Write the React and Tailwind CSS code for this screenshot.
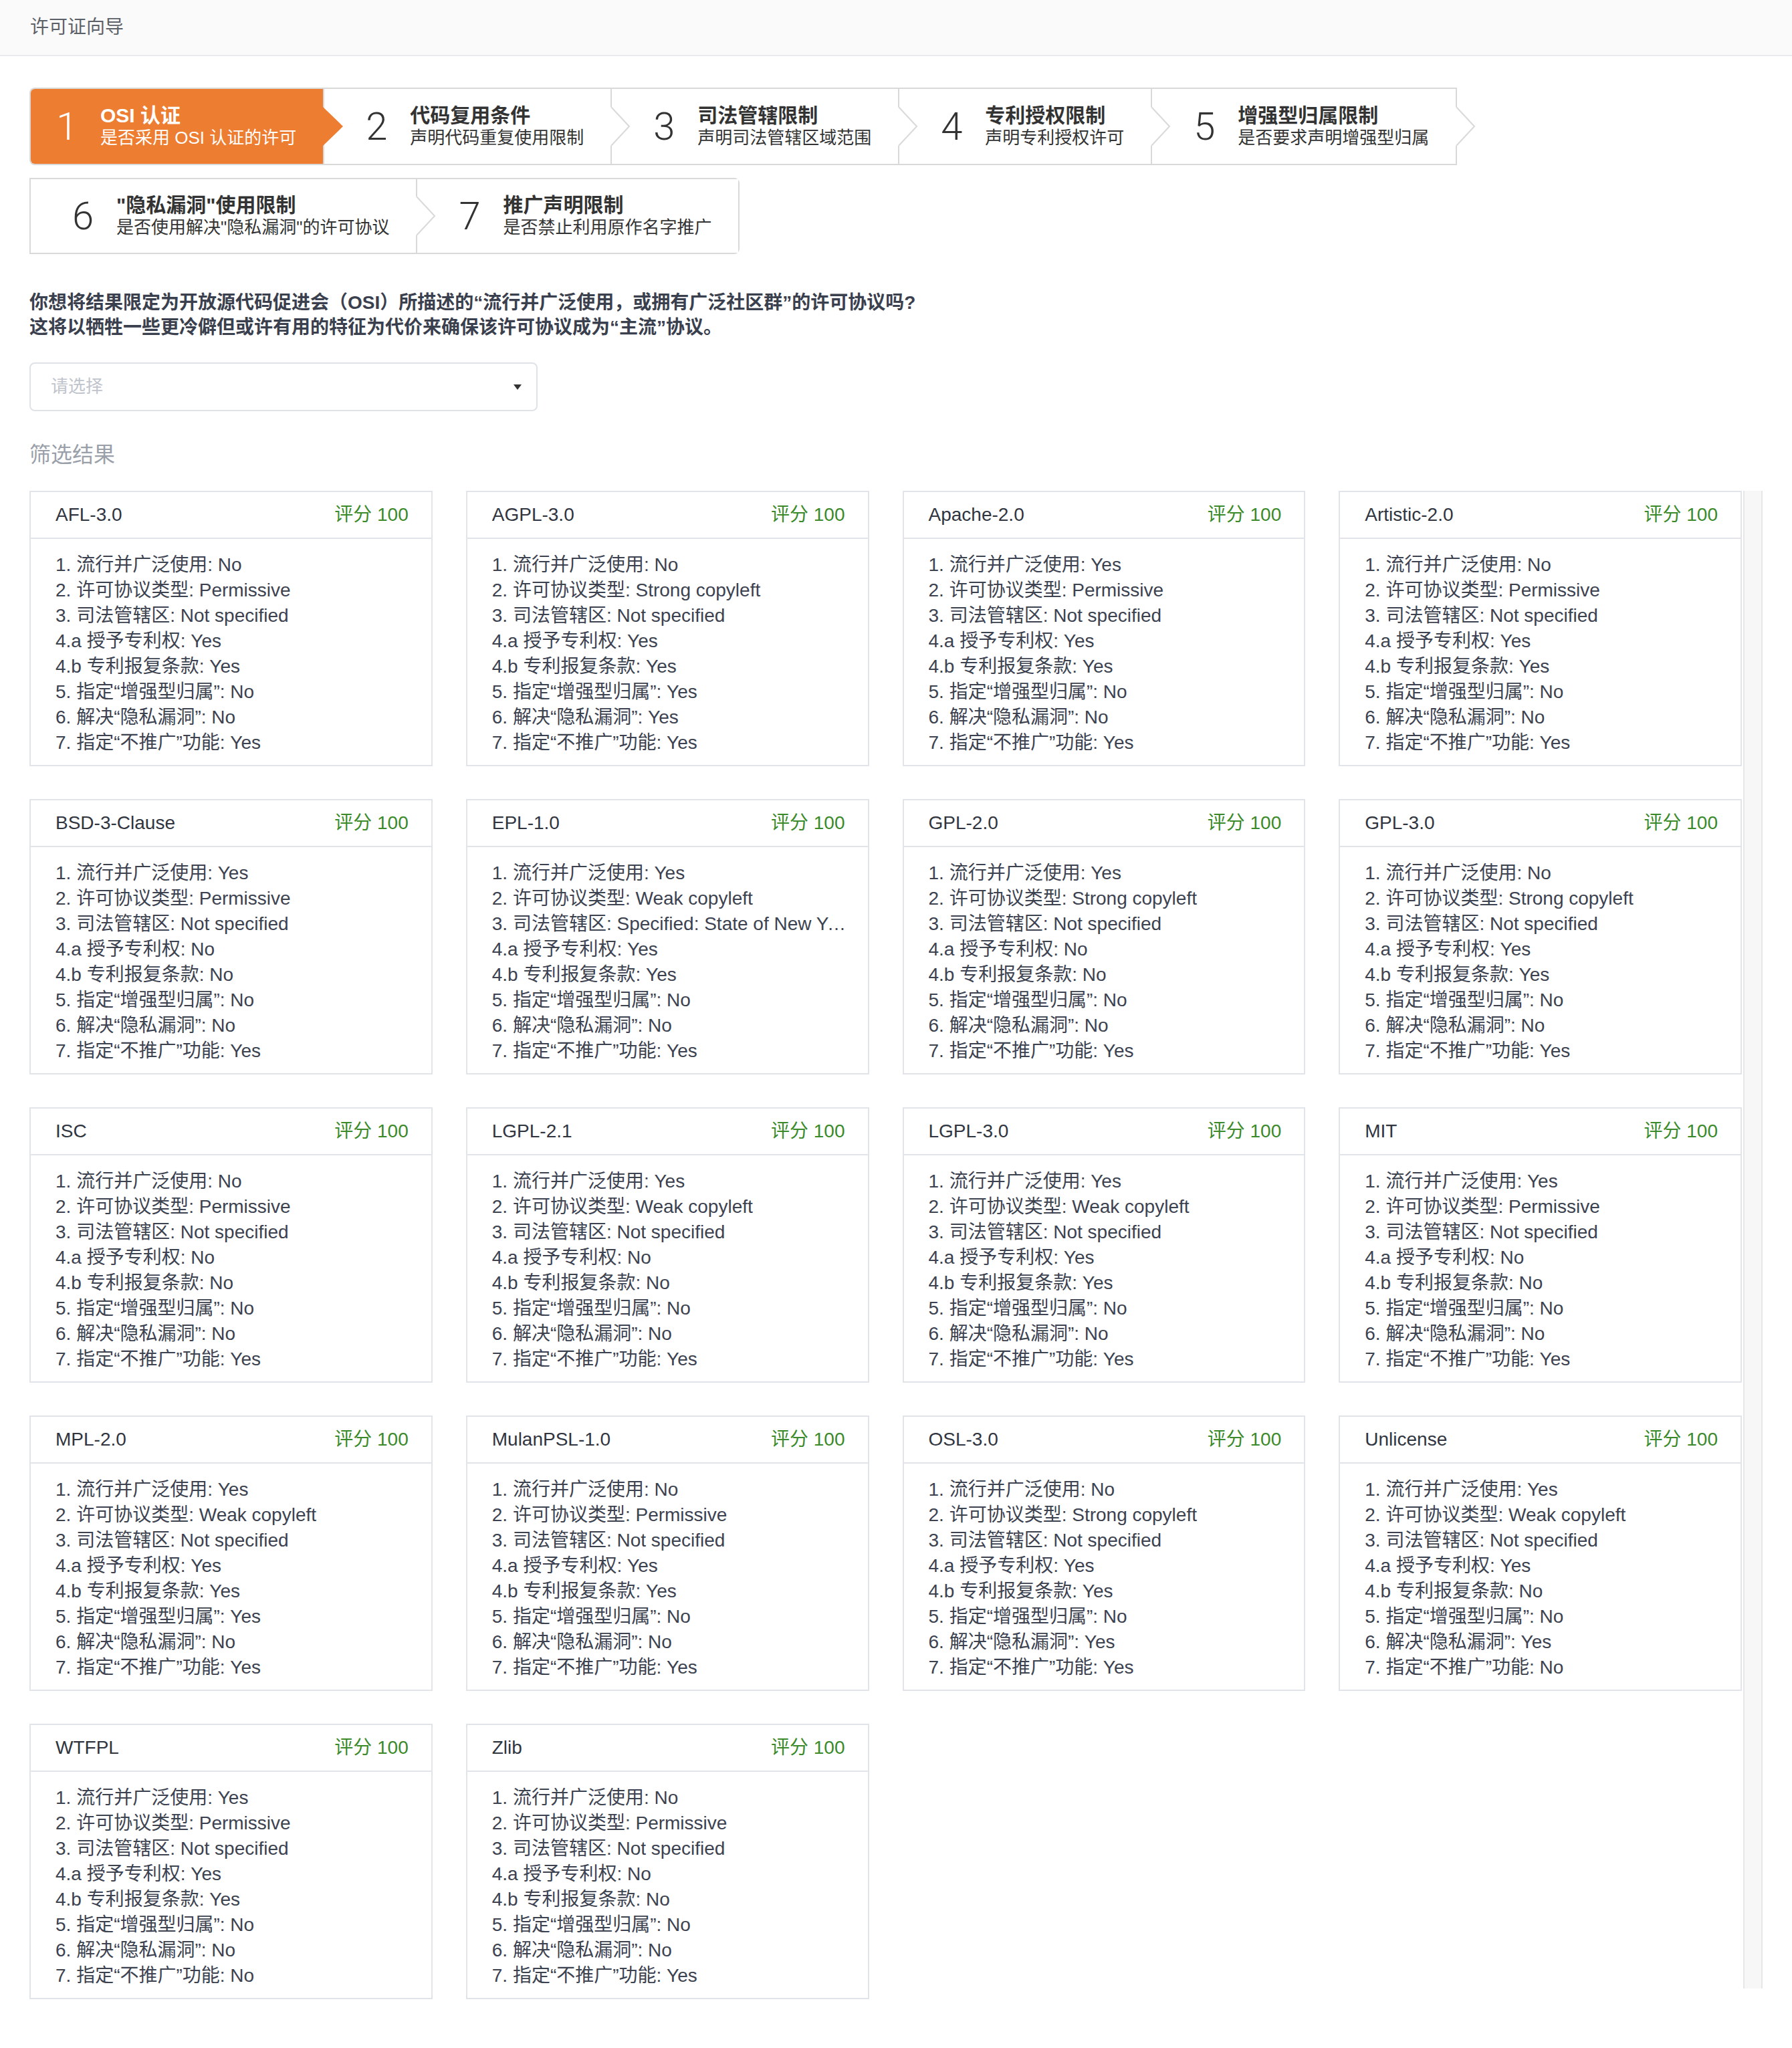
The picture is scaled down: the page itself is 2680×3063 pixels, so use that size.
import React from 'react';
import clsx from 'clsx';

const stepsTop = [
  { n: 1, title: 'OSI 认证', desc: '是否采用 OSI 认证的许可', active: true },
  { n: 2, title: '代码复用条件', desc: '声明代码重复使用限制' },
  { n: 3, title: '司法管辖限制', desc: '声明司法管辖区域范围' },
  { n: 4, title: '专利授权限制', desc: '声明专利授权许可' },
  { n: 5, title: '增强型归属限制', desc: '是否要求声明增强型归属' },
];

const stepsBottom = [
  { n: 6, title: '"隐私漏洞"使用限制', desc: '是否使用解决"隐私漏洞"的许可协议' },
  { n: 7, title: '推广声明限制', desc: '是否禁止利用原作名字推广' },
];

const labels = [
  '1. 流行并广泛使用',
  '2. 许可协议类型',
  '3. 司法管辖区',
  '4.a 授予专利权',
  '4.b 专利报复条款',
  '5. 指定“增强型归属”',
  '6. 解决“隐私漏洞”',
  '7. 指定“不推广”功能',
];

const NS = 'Not specified';

const licenses = [
  ['AFL-3.0', ['No', 'Permissive', NS, 'Yes', 'Yes', 'No', 'No', 'Yes']],
  ['AGPL-3.0', ['No', 'Strong copyleft', NS, 'Yes', 'Yes', 'Yes', 'Yes', 'Yes']],
  ['Apache-2.0', ['Yes', 'Permissive', NS, 'Yes', 'Yes', 'No', 'No', 'Yes']],
  ['Artistic-2.0', ['No', 'Permissive', NS, 'Yes', 'Yes', 'No', 'No', 'Yes']],
  ['BSD-3-Clause', ['Yes', 'Permissive', NS, 'No', 'No', 'No', 'No', 'Yes']],
  ['EPL-1.0', ['Yes', 'Weak copyleft', 'Specified: State of New York', 'Yes', 'Yes', 'No', 'No', 'Yes']],
  ['GPL-2.0', ['Yes', 'Strong copyleft', NS, 'No', 'No', 'No', 'No', 'Yes']],
  ['GPL-3.0', ['No', 'Strong copyleft', NS, 'Yes', 'Yes', 'No', 'No', 'Yes']],
  ['ISC', ['No', 'Permissive', NS, 'No', 'No', 'No', 'No', 'Yes']],
  ['LGPL-2.1', ['Yes', 'Weak copyleft', NS, 'No', 'No', 'No', 'No', 'Yes']],
  ['LGPL-3.0', ['Yes', 'Weak copyleft', NS, 'Yes', 'Yes', 'No', 'No', 'Yes']],
  ['MIT', ['Yes', 'Permissive', NS, 'No', 'No', 'No', 'No', 'Yes']],
  ['MPL-2.0', ['Yes', 'Weak copyleft', NS, 'Yes', 'Yes', 'Yes', 'No', 'Yes']],
  ['MulanPSL-1.0', ['No', 'Permissive', NS, 'Yes', 'Yes', 'No', 'No', 'Yes']],
  ['OSL-3.0', ['No', 'Strong copyleft', NS, 'Yes', 'Yes', 'No', 'Yes', 'Yes']],
  ['Unlicense', ['Yes', 'Weak copyleft', NS, 'Yes', 'No', 'No', 'Yes', 'No']],
  ['WTFPL', ['Yes', 'Permissive', NS, 'Yes', 'Yes', 'No', 'No', 'No']],
  ['Zlib', ['No', 'Permissive', NS, 'No', 'No', 'No', 'No', 'Yes']],
];

function Step({ step, first, arrow }) {
  const { n, title, desc, active } = step;
  return (
    <div
      className={clsx(
        'relative flex h-full items-center pr-[40px]',
        first ? 'pl-[38px]' : 'pl-[62px]',
        arrow && 'border-r-2 border-[#d9d9d9]',
        active ? 'bg-[#ed7d31] text-white rounded-l-[6px]' : 'bg-white text-[#333333]'
      )}
    >
      <span className="w-[32px] mr-[34px] text-[58px] font-light leading-none font-['Roboto','Liberation_Sans',sans-serif]">
        {n}
      </span>
      <div className="whitespace-nowrap">
        <div className="text-[30px] font-bold leading-[34px]">{title}</div>
        <div className="text-[26px] leading-[32px]">{desc}</div>
      </div>
      {arrow && (
        <svg
          className="absolute left-full top-1/2 -translate-y-1/2 z-10"
          width="31"
          height="58"
          viewBox="0 0 31 58"
        >
          {active ? (
            <polygon points="0,0 30,29 0,58" fill="#ed7d31" />
          ) : (
            <>
              <polygon points="0,0 2,0 29,29 2,58 0,58" fill="#ffffff" />
              <polyline points="1,0 28,29 1,58" fill="none" stroke="#d9d9d9" strokeWidth="2" />
            </>
          )}
        </svg>
      )}
    </div>
  );
}

function LicenseCard({ name, values }) {
  return (
    <div className="border-2 border-[#e1e4e9] bg-white">
      <div className="h-[70px] flex items-center justify-between pl-[37px] pr-[34px] border-b-2 border-[#e1e4e9] text-[28px]">
        <span className="text-[#303540]">{name}</span>
        <span className="text-[#3a8a2a]">评分 100</span>
      </div>
      <div className="pl-[37px] pr-[22px] pt-[20px] pb-[14px] text-[28px] leading-[38px] text-[#3c4250]">
        {labels.map((label, i) => (
          <div key={label} className="truncate">
            {label}: {values[i]}
          </div>
        ))}
      </div>
    </div>
  );
}

export default function App() {
  return (
    <div className="min-h-screen bg-white pb-[60px] font-['Liberation_Sans','Noto_Sans_CJK_SC',sans-serif]">
      <header className="h-[84px] bg-[#fafafa] border-b-2 border-[#e8eaed] flex items-center px-[45px] text-[28px] text-[#5c6068]">
        许可证向导
      </header>

      <main className="px-[44px] pt-[47px]">
        <div className="flex flex-col items-start gap-[19px]">
          <div className="flex h-[116px] border-y-2 border-l-2 border-[#d9d9d9] rounded-l-[8px]">
            {stepsTop.map((s, i) => (
              <Step key={s.n} step={s} first={i === 0} arrow />
            ))}
          </div>
          <div className="flex h-[114px] border-2 border-[#d9d9d9] rounded-r-[8px]">
            <Step step={stepsBottom[0]} first={false} arrow />
            <Step step={stepsBottom[1]} first={false} arrow={false} />
          </div>
        </div>

        <div className="mt-[54px] text-[28px] font-bold leading-[37px] text-[#3a404d]">
          <p>你想将结果限定为开放源代码促进会（OSI）所描述的“流行并广泛使用，或拥有广泛社区群”的许可协议吗?</p>
          <p>这将以牺牲一些更冷僻但或许有用的特征为代价来确保该许可协议成为“主流”协议。</p>
        </div>

        <div className="mt-[34px] w-[760px] h-[73px] border-2 border-[#dfe2e7] rounded-[8px] flex items-center justify-between pl-[30px] pr-[22px] bg-white">
          <span className="text-[26px] text-[#c0c4cc]">请选择</span>
          <svg width="12" height="8" viewBox="0 0 12 8">
            <polygon points="0,0 12,0 6,8" fill="#333333" />
          </svg>
        </div>

        <div className="mt-[43px] text-[32px] leading-[44px] text-[#9aa0a9]">筛选结果</div>

        <div className="mt-[32px] flex">
          <div className="flex-1 grid grid-cols-4 gap-x-[50px] gap-y-[49px]">
            {licenses.map(([name, values]) => (
              <LicenseCard key={name} name={name} values={values} />
            ))}
          </div>
          <div className="ml-[2px] w-[29px] mb-[16px] bg-[#f7f7f7] border-x-2 border-[#e6e7e9]" />
        </div>
      </main>
    </div>
  );
}
